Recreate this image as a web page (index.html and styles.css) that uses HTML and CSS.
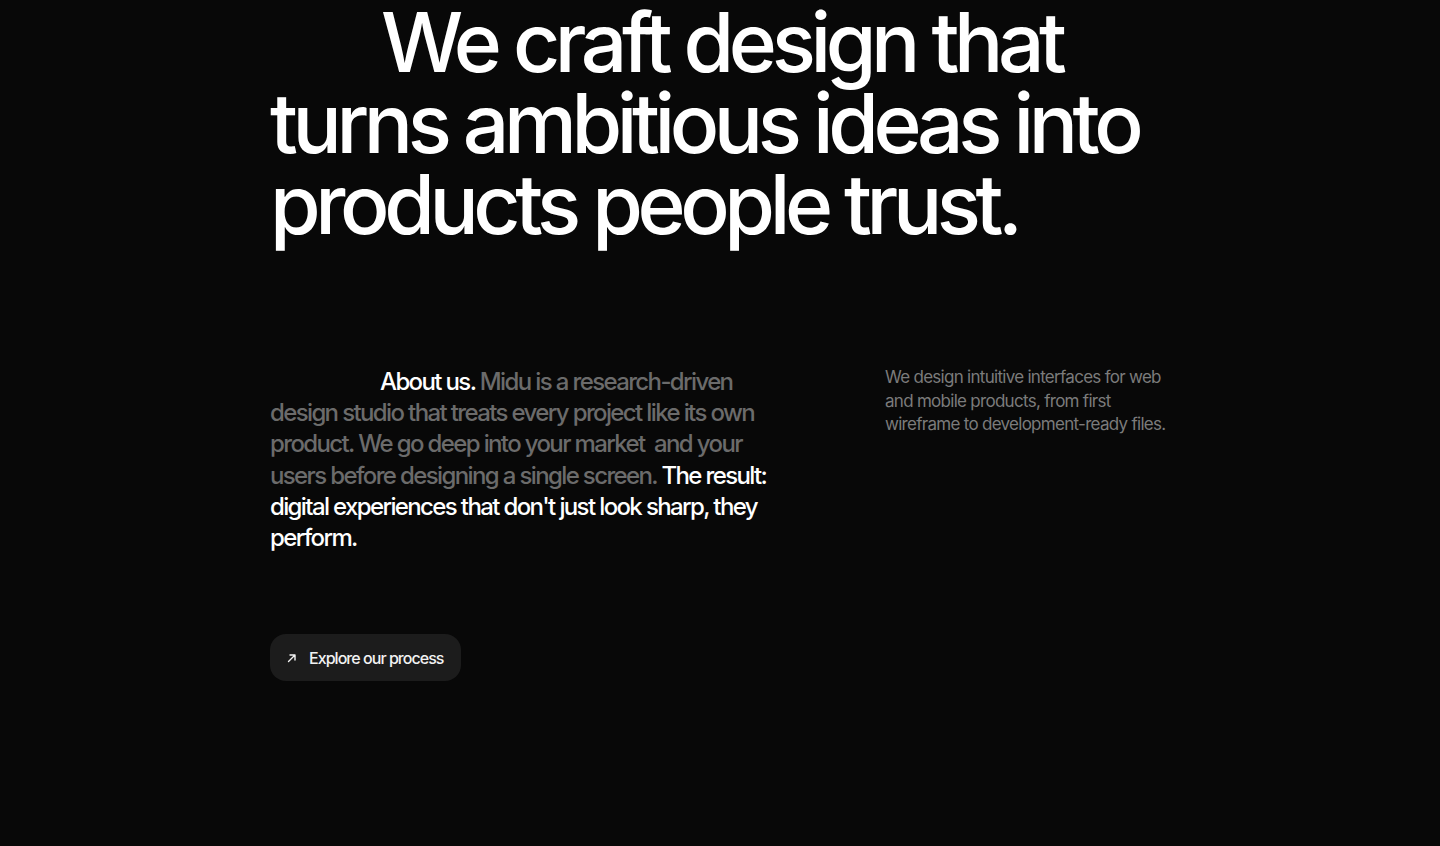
FILE: index.html
```html
<!DOCTYPE html>
<html lang="en">
<head>
<meta charset="utf-8">
<title>Midu — About</title>
<link rel="stylesheet" href="styles.css">
</head>
<body>
<main class="page">
  <h1 class="headline">We craft design that turns ambitious ideas into products people trust.</h1>
  <section class="about">
    <p class="about-text"><span class="hi">About us.</span> Midu is a research-driven design studio that treats every project like its own product. We go deep into your market&nbsp; and your users before designing a single screen. <span class="hi">The result: digital experiences that don't just look sharp, they perform.</span></p>
    <p class="about-side">We design intuitive interfaces for web and mobile products, from first wireframe to development-ready files.</p>
  </section>
  <a class="btn" href="#">
    <svg class="btn-icon" viewBox="0 0 12 12" width="12" height="12" aria-hidden="true"><path d="M2.5 9.5L9 3M4 3h5v5" fill="none" stroke="currentColor" stroke-width="1.4" stroke-linecap="round" stroke-linejoin="round"/></svg>
    <span>Explore our process</span>
  </a>
</main>
</body>
</html>
```

FILE: styles.css
```css
html, body {
  margin: 0;
  padding: 0;
  background: #080808;
  height: 100%;
}
body {
  font-family: Inter, "Noto Sans", sans-serif;
  color: #ffffff;
  overflow: hidden;
}
.page {
  width: 900px;
  margin: 0 auto;
  padding-top: 2px;
  display: flex;
  flex-direction: column;
  align-items: flex-start;
}
.headline {
  margin: 0;
  width: 100%;
  font-size: 82px;
  line-height: 81px;
  font-weight: 500;
  letter-spacing: -0.066em;
  text-indent: 111px;
  color: #ffffff;
}
.about {
  margin-top: 121px;
  display: grid;
  grid-template-columns: 500px 285px;
  column-gap: 115px;
  width: 100%;
}
.about-text {
  margin: 0;
  font-size: 24px;
  line-height: 31.2px;
  font-weight: 500;
  letter-spacing: -0.068em;
  text-indent: 110px;
  color: #6b6b6b;
}
.about-text .hi {
  color: #ffffff;
}
.about-side {
  margin: 0;
  font-size: 17px;
  line-height: 23.5px;
  font-weight: 400;
  letter-spacing: -0.042em;
  color: #7b7b7b;
}
.btn {
  margin-top: 81px;
  height: 47px;
  box-sizing: border-box;
  padding: 0 17px 0 16px;
  display: inline-flex;
  align-items: center;
  gap: 11px;
  background: #1c1c1c;
  border-radius: 16px;
  color: #f2f2f2;
  text-decoration: none;
  font-size: 16px;
  font-weight: 500;
  letter-spacing: -0.06em;
}
.btn-icon {
  display: block;
}
```
